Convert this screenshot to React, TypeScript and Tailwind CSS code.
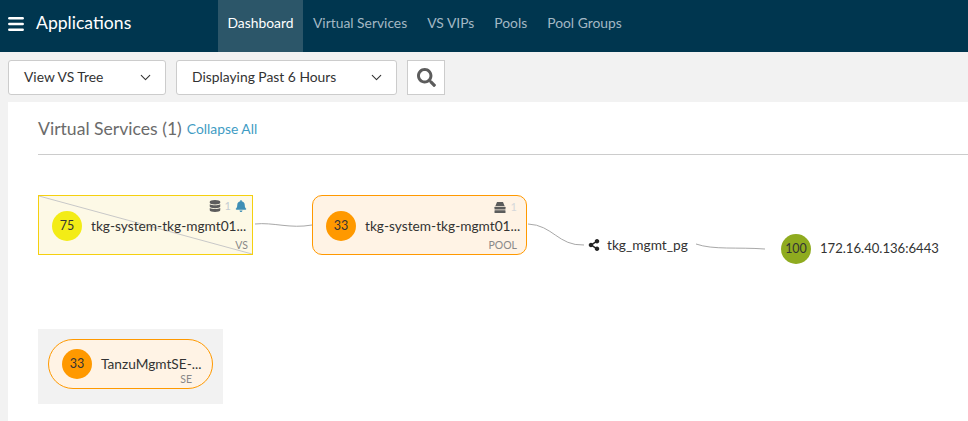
import { ChevronDown, Menu } from "lucide-react";
import { FaBell, FaDatabase, FaSearch, FaShareAlt } from "react-icons/fa";

function Dropdown({ label, className }: { label: string; className: string }) {
  return (
    <div className={`flex h-[35px] items-center justify-between rounded-[3px] border border-[#cccccc] bg-white pl-[15px] pr-[11px] text-[13.85px] text-[#333333] ${className}`}>
      <span>{label}</span>
      <ChevronDown size={17} strokeWidth={1.5} className="text-[#333]" />
    </div>
  );
}

function Dot({ value, className }: { value: string; className: string }) {
  return (
    <div className={`flex h-[30px] w-[30px] shrink-0 items-center justify-center rounded-full text-[12.5px] text-[#333] ${className}`}>
      {value}
    </div>
  );
}

export default function App() {
  return (
    <div className="flex h-[421px] w-[968px] flex-col overflow-hidden bg-[#f2f2f2] font-['Lato',sans-serif]">
      <header className="flex h-[52px] shrink-0 bg-[#00364f]">
        <div className="flex w-[218px] items-center pb-[5px]">
          <Menu size={20} strokeWidth={3} className="ml-[6px] text-white" />
          <span className="ml-[10px] text-[17.6px] text-white">Applications</span>
        </div>
        <nav className="flex text-[13.85px] text-[#a3b8c4]">
          <div className="flex w-[85px] items-center justify-center bg-[#2c5669] pb-[5px] text-white">Dashboard</div>
          <div className="flex items-center pb-[5px] pl-[10px]">Virtual Services</div>
          <div className="flex items-center pb-[5px] pl-[20px]">VS VIPs</div>
          <div className="flex items-center pb-[5px] pl-[20px]">Pools</div>
          <div className="flex items-center pb-[5px] pl-[20px]">Pool Groups</div>
        </nav>
      </header>
      <div className="flex h-[50px] shrink-0 items-center gap-[10px] pl-[8px]">
        <Dropdown label="View VS Tree" className="w-[158px]" />
        <Dropdown label="Displaying Past 6 Hours" className="w-[221px]" />
        <div className="flex h-[35px] w-[38px] items-center justify-center border border-[#cccccc] bg-white">
          <FaSearch size={19} className="text-[#5c5c5c]" />
        </div>
      </div>
      <main className="relative ml-[8px] flex-1 bg-white pl-[30px]">
        <div className="flex h-[53px] items-center gap-[5px] border-b border-[#cccccc] pt-[3px]">
          <span className="text-[17.6px] text-[#6b6b6b]">Virtual Services (1)</span>
          <span className="mb-[1px] text-[13.85px] text-[#3f9cc4]">Collapse All</span>
        </div>

        <svg className="absolute left-0 top-0" width="960" height="319" fill="none" stroke="#a8a8a8" strokeWidth="1">
          <path d="M247 122 C265 120 282 127 304 123" />
          <path d="M520 122 C545 123 550 144 576 143" />
          <path d="M688 142 C705 148 730 145 757 147" />
        </svg>

        {/* VS node */}
        <div className="absolute left-[30px] top-[93px] h-[60px] w-[215px] overflow-hidden border border-[#f5d00f] bg-[#fdf9e6]">
          <svg className="absolute inset-0" width="213" height="58" fill="none">
            <line x1="0" y1="0" x2="213" y2="58" stroke="#c8c8c8" strokeWidth="1" />
          </svg>
          <div className="relative flex h-full items-center pl-[13px] pt-[2px]">
            <Dot value="75" className="bg-[#f3ec16]" />
            <span className="ml-[9px] text-[13.7px] text-[#333]">tkg-system-tkg-mgmt01...</span>
          </div>
          <div className="absolute right-[5px] top-[2px] flex items-center gap-[4px] text-[11px] text-[#c3ccd2]">
            <FaDatabase size={12} className="text-[#5c5c5c]" />
            <span>1</span>
            <FaBell size={12} className="text-[#3f8fb5]" />
          </div>
          <span className="absolute bottom-0 right-[4px] text-[10.5px] text-[#888]">VS</span>
        </div>

        {/* Pool node */}
        <div className="absolute left-[304px] top-[93px] h-[60px] w-[215px] rounded-[10px] border border-[#ff9900] bg-[#fff3e5]">
          <div className="flex h-full items-center pl-[13px] pt-[2px]">
            <Dot value="33" className="bg-[#ff9900]" />
            <span className="ml-[9px] text-[13.7px] text-[#333]">tkg-system-tkg-mgmt01...</span>
          </div>
          <div className="absolute right-[9px] top-[3px] flex items-center gap-[5px] text-[11px] text-[#d5d8da]">
            <svg width="12" height="11" viewBox="0 0 12 11" fill="#5c5c5c">
              <path d="M3 0h6l1.6 4H1.4z" />
              <rect x="0.5" y="4.8" width="11" height="2.7" rx="0.5" />
              <rect x="0.5" y="8.2" width="11" height="2.7" rx="0.5" />
            </svg>
            <span>1</span>
          </div>
          <span className="absolute bottom-0 right-[9px] text-[10.5px] text-[#888]">POOL</span>
        </div>

        {/* Pool group */}
        <div className="absolute left-[580px] top-[133px] flex items-center gap-[7px] text-[13.7px] text-[#333]">
          <FaShareAlt size={12} className="text-[#222]" />
          <span>tkg_mgmt_pg</span>
        </div>

        {/* Server */}
        <div className="absolute left-[773px] top-[132px] flex items-center gap-[9px] text-[13.1px] text-[#333]">
          <Dot value="100" className="bg-[#8fab1f]" />
          <span>172.16.40.136:6443</span>
        </div>

        {/* SE section */}
        <div className="absolute left-[30px] top-[227px] flex h-[75px] w-[185px] justify-center bg-[#f2f2f2] pt-[10px]">
          <div className="relative flex h-[50px] w-[165px] items-center rounded-[25px] border border-[#ff9900] bg-[#fff3e5] pl-[13px]">
            <Dot value="33" className="bg-[#ff9900]" />
            <span className="ml-[9px] text-[13.7px] text-[#333]">TanzuMgmtSE-...</span>
            <span className="absolute bottom-0 right-[20px] text-[10.5px] text-[#888]">SE</span>
          </div>
        </div>
      </main>
    </div>
  );
}
